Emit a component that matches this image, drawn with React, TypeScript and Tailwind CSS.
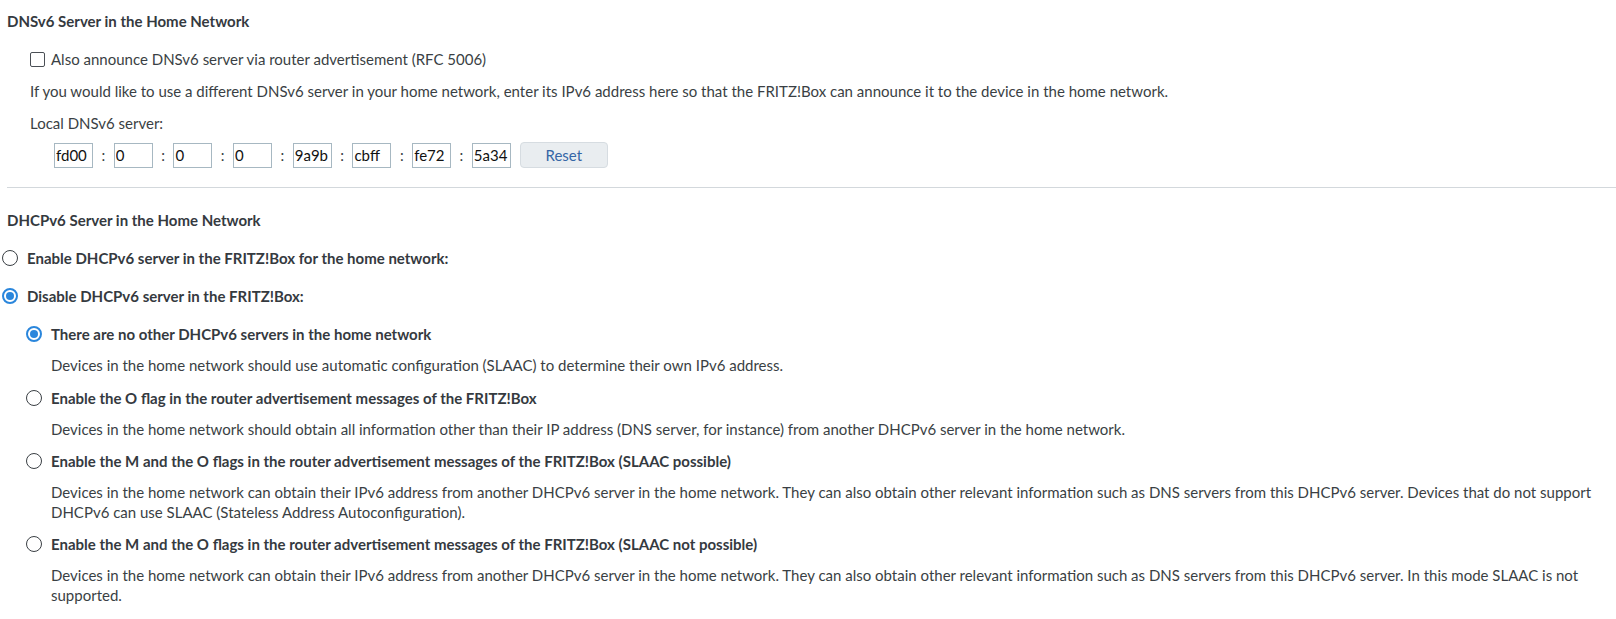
import React, { useState } from 'react';

const ipv6Parts = ['fd00', '0', '0', '0', '9a9b', 'cbff', 'fe72', '5a34'];

type RadioProps = {
  checked: boolean;
  onChange: () => void;
  children: React.ReactNode;
};

const Radio: React.FC<RadioProps> = ({ checked, onChange, children }) => (
  <label className="flex items-center cursor-pointer" onClick={onChange}>
    <span
      className={
        checked
          ? 'flex items-center justify-center w-[16px] h-[16px] rounded-full border-2 border-[#2a86dc] bg-white shrink-0'
          : 'w-[16px] h-[16px] rounded-full border-[1.5px] border-[#3a3f44] bg-white shrink-0'
      }
    >
      {checked && <span className="w-[8px] h-[8px] rounded-full bg-[#2a86dc]" />}
    </span>
    <span className="ml-[9px] font-bold text-[#353a3f]">{children}</span>
  </label>
);

const subOptions = [
  {
    label: 'There are no other DHCPv6 servers in the home network',
    text: 'Devices in the home network should use automatic configuration (SLAAC) to determine their own IPv6 address.',
  },
  {
    label: 'Enable the O flag in the router advertisement messages of the FRITZ!Box',
    text: 'Devices in the home network should obtain all information other than their IP address (DNS server, for instance) from another DHCPv6 server in the home network.',
  },
  {
    label: 'Enable the M and the O flags in the router advertisement messages of the FRITZ!Box (SLAAC possible)',
    text: 'Devices in the home network can obtain their IPv6 address from another DHCPv6 server in the home network. They can also obtain other relevant information such as DNS servers from this DHCPv6 server. Devices that do not support DHCPv6 can use SLAAC (Stateless Address Autoconfiguration).',
  },
  {
    label: 'Enable the M and the O flags in the router advertisement messages of the FRITZ!Box (SLAAC not possible)',
    text: 'Devices in the home network can obtain their IPv6 address from another DHCPv6 server in the home network. They can also obtain other relevant information such as DNS servers from this DHCPv6 server. In this mode SLAAC is not supported.',
  },
];

export default function App() {
  const [announce, setAnnounce] = useState(false);
  const [parts, setParts] = useState(ipv6Parts);
  const [dhcpMode, setDhcpMode] = useState<'enable' | 'disable'>('disable');
  const [subMode, setSubMode] = useState(0);

  return (
    <div
      className="bg-white text-[15px] leading-[20px] text-[#3a3f44] min-h-[619px] pr-2"
      style={{ fontFamily: 'Lato, "Open Sans", sans-serif' }}
    >
      <div className="pl-[7px] pt-[11px]">
        <h2 className="font-bold text-[#353a3f]">DNSv6 Server in the Home Network</h2>

        <div className="pl-[23px]">
          <label className="flex items-center mt-[18px] cursor-pointer">
            <input
              type="checkbox"
              checked={announce}
              onChange={(e) => setAnnounce(e.target.checked)}
              className="appearance-none w-[15px] h-[15px] border border-[#4a4f55] rounded-[2px] bg-white shrink-0 checked:bg-[#2a86dc] checked:border-[#2a86dc]"
            />
            <span className="ml-[6px]">Also announce DNSv6 server via router advertisement (RFC 5006)</span>
          </label>

          <p className="mt-[12px]">
            If you would like to use a different DNSv6 server in your home network, enter its IPv6 address here so that the FRITZ!Box can announce it to the device in the home network.
          </p>

          <p className="mt-[12px]">Local DNSv6 server:</p>

          <div className="flex items-center mt-[9px] pl-[24px]">
            {parts.map((p, i) => (
              <React.Fragment key={i}>
                {i > 0 && <span className="w-[20.7px] text-center text-[#3a3f44]">:</span>}
                <input
                  type="text"
                  value={p}
                  onChange={(e) => {
                    const next = [...parts];
                    next[i] = e.target.value;
                    setParts(next);
                  }}
                  className="w-[39px] h-[25px] border border-[#a7b8c2] px-[1px] text-[15px] text-[#111] outline-none"
                />
              </React.Fragment>
            ))}
            <button
              type="button"
              onClick={() => setParts(ipv6Parts)}
              className="ml-[9px] w-[88px] h-[26px] rounded-[4px] border border-[#d6dce1] bg-[#e9edf0] text-[#3566a6] text-[15px]"
            >
              Reset
            </button>
          </div>
        </div>
      </div>

      <div className="ml-[7px] -mr-2 mt-[19px] border-t border-[#d3d8dc]" />

      <div className="pl-[7px] pt-[22px]">
        <h2 className="font-bold text-[#353a3f]">DHCPv6 Server in the Home Network</h2>
      </div>

      <div className="pl-[2px] mt-[18px]">
        <Radio checked={dhcpMode === 'enable'} onChange={() => setDhcpMode('enable')}>
          Enable DHCPv6 server in the FRITZ!Box for the home network:
        </Radio>
        <div className="mt-[18px]">
          <Radio checked={dhcpMode === 'disable'} onChange={() => setDhcpMode('disable')}>
            Disable DHCPv6 server in the FRITZ!Box:
          </Radio>
        </div>

        <div className="pl-[24px] mt-[18px]">
          {subOptions.map((o, i) => (
            <div key={i} className={i > 0 ? 'mt-[12px]' : ''}>
              <Radio checked={subMode === i} onChange={() => setSubMode(i)}>
                {o.label}
              </Radio>
              <p className="pl-[25px] mt-[12px] leading-[19.6px]">{o.text}</p>
            </div>
          ))}
        </div>
      </div>
    </div>
  );
}
